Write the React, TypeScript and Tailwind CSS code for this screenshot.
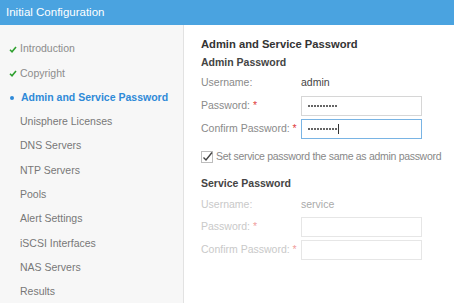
import React from "react";

const steps = [
  { label: "Introduction", state: "done" },
  { label: "Copyright", state: "done" },
  { label: "Admin and Service Password", state: "active" },
  { label: "Unisphere Licenses", state: "todo" },
  { label: "DNS Servers", state: "todo" },
  { label: "NTP Servers", state: "todo" },
  { label: "Pools", state: "todo" },
  { label: "Alert Settings", state: "todo" },
  { label: "iSCSI Interfaces", state: "todo" },
  { label: "NAS Servers", state: "todo" },
  { label: "Results", state: "todo" },
];

const Check = () => (
  <svg width="8" height="7" viewBox="0 0 8 7" className="mr-[3px]">
    <path d="M1 3.8 L3 5.8 L7 1" stroke="#2ea02e" strokeWidth="1.6" fill="none" />
  </svg>
);

const Row = ({ label, disabled, required, children }: any) => (
  <div className="flex items-center h-[20px]">
    <div
      className={`w-[100px] shrink-0 whitespace-nowrap ${
        disabled ? "text-[#c9c9c9]" : "text-[#8a8a8a]"
      }`}
    >
      {label}
      {required ? (
        <span className={disabled ? "text-[#f0a0a0]" : "text-[#e03c3c]"}> *</span>
      ) : null}
    </div>
    {children}
  </div>
);

const Dots = () => (
  <svg width="30" height="4" viewBox="0 0 30 4">
    {Array.from({ length: 10 }).map((_, i) => (
      <circle key={i} cx={1 + i * 3} cy="2" r="1" fill="#333" />
    ))}
  </svg>
);

const Input = ({ disabled, focused, dots, caret }: any) => (
  <div
    className={`w-[121px] h-[20px] border flex items-center pl-[6px] shrink-0 ${
      focused ? "border-[#79b4e4]" : disabled ? "border-[#e6e6e6]" : "border-[#d6d6d6]"
    }`}
  >
    {dots ? <Dots /> : null}
    {caret ? <span className="w-px h-[10px] bg-[#333]" /> : null}
  </div>
);

export default function App() {
  return (
    <div
      className="w-[454px] h-[303px] overflow-hidden bg-white flex flex-col text-[10.5px]"
      style={{ fontFamily: '"Liberation Sans", Arial, sans-serif' }}
    >
      <div className="h-[25px] bg-[#4aa3e0] text-white text-[11.5px] pl-[6px] flex items-center shrink-0">
        Initial Configuration
      </div>
      <div className="flex flex-1">
        <div className="w-[184px] bg-[#f7f7f7] border-r border-[#e2e2e2] pt-[12px] shrink-0">
          {steps.map((s) => (
            <div key={s.label} className="h-[24.3px] flex items-center pl-[9px] whitespace-nowrap">
              {s.state === "done" ? (
                <Check />
              ) : s.state === "active" ? (
                <span className="w-[4px] h-[4px] rounded-full bg-[#2f8ad8] mr-[7px] ml-px" />
              ) : (
                <span className="w-[11px]" />
              )}
              <span
                className={
                  s.state === "active"
                    ? "text-[#2f8ad8] font-bold"
                    : s.state === "done"
                    ? "text-[#8c8c8c]"
                    : "text-[#777]"
                }
              >
                {s.label}
              </span>
            </div>
          ))}
        </div>
        <div className="flex-1 pl-[17px] pt-[12px] whitespace-nowrap">
          <div className="text-[11.2px] font-bold text-[#333] h-[14px] leading-[14px]">
            Admin and Service Password
          </div>
          <div className="text-[10.5px] font-bold text-[#444] mt-[4px] h-[14px] leading-[14px]">
            Admin Password
          </div>
          <div className="mt-[4px]">
            <Row label="Username:">
              <span className="text-[#444]">admin</span>
            </Row>
          </div>
          <div className="mt-[3px] flex flex-col gap-[3px]">
            <Row label="Password:" required>
              <Input dots />
            </Row>
            <Row label="Confirm Password:" required>
              <Input dots caret focused />
            </Row>
          </div>
          <div className="flex items-center mt-[8px] h-[20px]">
            <svg width="12" height="12" viewBox="0 0 12 12" className="mr-[3px] shrink-0">
              <rect x="0.5" y="0.5" width="11" height="11" fill="white" stroke="#bdbdbd" />
              <path d="M2.5 6.5 L5 9 L11 1.5" stroke="#444" strokeWidth="1.4" fill="none" />
            </svg>
            <span className="text-[#888] tracking-[-0.3px]">
              Set service password the same as admin password
            </span>
          </div>
          <div className="text-[10.5px] font-bold text-[#444] mt-[9px] h-[14px] leading-[14px]">
            Service Password
          </div>
          <div className="mt-[5px]">
            <Row label="Username:" disabled>
              <span className="text-[#aaa]">service</span>
            </Row>
          </div>
          <div className="mt-[2px] flex flex-col gap-[3px]">
            <Row label="Password:" required disabled>
              <Input disabled />
            </Row>
            <Row label="Confirm Password:" required disabled>
              <Input disabled />
            </Row>
          </div>
        </div>
      </div>
    </div>
  );
}
